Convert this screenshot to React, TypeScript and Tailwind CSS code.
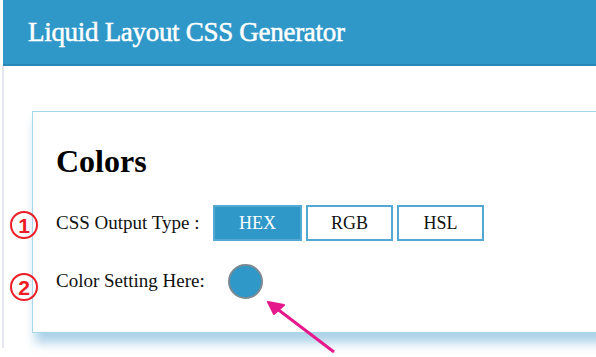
import React from "react"

const serif = { fontFamily: '"Liberation Serif", "DejaVu Serif", serif' }

function Badge({ n }: { n: string }) {
  return (
    <span className="absolute left-[10px] flex h-[28px] w-[28px] items-center justify-center rounded-full border-2 border-[#ee1c25] text-[21px] font-bold leading-none text-[#ee1c25]" style={{ fontFamily: '"Liberation Sans", Arial, sans-serif' }}>
      {n}
    </span>
  )
}

export default function App() {
  const types = ["HEX", "RGB", "HSL"]
  return (
    <div className="relative h-[357px] w-[596px] overflow-hidden bg-white" style={serif}>
      <header className="ml-[3px] flex h-[66px] items-center border-b-2 border-[#2a86b4] bg-[#2f98c9] pl-[25px]">
        <h1 className="text-[27px] font-normal tracking-[-0.3px] text-white [-webkit-text-stroke:0.5px_white]">Liquid Layout CSS Generator</h1>
      </header>

      <div className="ml-[2px] h-[282px] border-l-2 border-[#e4e7ef] pl-[28px] pt-[45px]">
        <section className="w-[620px] border border-[#a9d5eb] bg-white pb-[33px] pl-[23px] pt-[29px] shadow-[3px_10px_10px_rgba(70,155,205,0.45)]">
          <h2 className="text-[32px] font-bold leading-[40px] text-black">Colors</h2>

          <div className="mt-[24px] flex items-center">
            <span className="w-[157px] text-[19px] text-[#111]">CSS Output Type :</span>
            <div className="flex gap-[4px]">
              {types.map((t, i) => (
                <button
                  key={t}
                  className={
                    i === 0
                      ? "h-[36px] w-[89px] border-2 border-[#54a9d4] bg-[#2f98c9] text-[18px] text-white"
                      : "h-[36px] w-[87px] border-2 border-[#54a9d4] bg-white text-[18px] text-[#111]"
                  }
                >
                  {t}
                </button>
              ))}
            </div>
          </div>

          <div className="mt-[23px] flex items-center">
            <span className="w-[172px] text-[19px] text-[#111]">Color Setting Here:</span>
            <span className="h-[35px] w-[35px] rounded-full border-2 border-[#7b8a92] bg-[#2f98c9]" />
          </div>
        </section>
      </div>

      <div className="absolute left-0 top-[211px]">
        <Badge n="1" />
      </div>
      <div className="absolute left-0 top-[273px]">
        <Badge n="2" />
      </div>

      <svg className="absolute left-0 top-0" width="596" height="357" viewBox="0 0 596 357">
        <line x1="334" y1="352" x2="276" y2="308" stroke="#e5198c" strokeWidth="3" />
        <path d="M268 302 L284 305 L274 314 Z" fill="#e5198c" stroke="#e5198c" strokeWidth="2" strokeLinejoin="round" />
      </svg>
    </div>
  )
}
